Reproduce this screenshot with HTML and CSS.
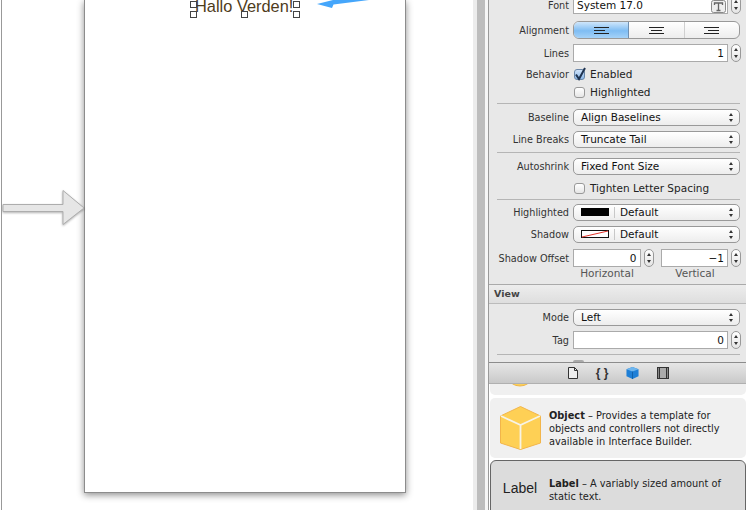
FILE: index.html
```html
<!DOCTYPE html>
<html lang="da">
<head>
  <meta charset="UTF-8" />
  <title>Interface Builder</title>
  <link rel="stylesheet" href="styles.css">
</head>
<body>
  <div class="app">
    <!-- Storyboard -->
    <div class="canvas">
      <svg class="entry-arrow" width="86" height="40" viewBox="0 0 86 40">
        <path d="M3 15.5H63V1.5L84 19L63 35.5V22.5H3Z" fill="#e6e6e6" stroke="#adadad" />
      </svg>
      <div class="scene">
        <div class="hello">
          Hallo Verden!
          <i class="handle h-ml"></i><i class="handle h-mr"></i>
          <i class="handle h-bl"></i><i class="handle h-bm"></i><i class="handle h-br"></i>
        </div>
      </div>
      <svg class="drag-arrow" width="56" height="12" viewBox="0 0 56 12">
        <path d="M0 4L15 8L16.5 4.5L52 0H16Z" fill="#45a6fb" />
      </svg>
    </div>

    <div class="splitter"></div>

    <!-- Inspector -->
    <div class="side">
      <div class="inspector">
        <div class="group first">
          <div class="row">
            <span class="lbl">Font</span>
            <div class="field text-left">System 17.0
              <svg class="t-btn" width="15" height="13" viewBox="0 0 15 13">
                <rect x=".5" y=".5" width="14" height="12" rx="2" fill="#eee" stroke="#8a8a8a" />
                <path d="M3.5 5V3H11.5V5M7.5 3V10.5M5.5 10.5H9.5" fill="none" stroke="#666" stroke-width="1.3" />
              </svg>
            </div>
            <div class="stepper"></div>
          </div>
          <div class="row gap-7">
            <span class="lbl">Alignment</span>
            <div class="segments">
              <div class="seg on">
                <svg width="15" height="7" viewBox="0 0 15 7"><path d="M0 .5H15M0 3.5H11M0 6.5H15" stroke="#222" /></svg>
              </div>
              <div class="seg">
                <svg width="15" height="7" viewBox="0 0 15 7"><path d="M0 .5H15M2 3.5H13M0 6.5H15" stroke="#222" /></svg>
              </div>
              <div class="seg divided">
                <svg width="15" height="7" viewBox="0 0 15 7"><path d="M0 .5H15M4 3.5H15M0 6.5H15" stroke="#222" /></svg>
              </div>
            </div>
          </div>
          <div class="row gap-5">
            <span class="lbl">Lines</span>
            <div class="field">1</div>
            <div class="stepper"></div>
          </div>
          <div class="row gap-3">
            <span class="lbl">Behavior</span>
            <label class="check on">
              <svg class="tick" width="13" height="14" viewBox="0 0 13 14"><path d="M2 7.5L5 12L11 1" fill="none" stroke="#1f3350" stroke-width="2" /></svg>
              Enabled
            </label>
          </div>
          <div class="row">
            <span class="lbl"></span>
            <label class="check">Highlighted</label>
          </div>
        </div>

        <div class="group pb-4">
          <div class="row">
            <span class="lbl">Baseline</span>
            <div class="popup">Align Baselines</div>
          </div>
          <div class="row gap-4">
            <span class="lbl">Line Breaks</span>
            <div class="popup">Truncate Tail</div>
          </div>
        </div>

        <div class="group">
          <div class="row">
            <span class="lbl">Autoshrink</span>
            <div class="popup">Fixed Font Size</div>
          </div>
          <div class="row gap-4">
            <span class="lbl"></span>
            <label class="check">Tighten Letter Spacing</label>
          </div>
        </div>

        <div class="group no-line">
          <div class="row">
            <span class="lbl">Highlighted</span>
            <div class="popup"><span class="swatch black"></span><span class="swatch-sep"></span>Default</div>
          </div>
          <div class="row gap-4">
            <span class="lbl">Shadow</span>
            <div class="popup">
              <svg class="swatch" width="28" height="8" viewBox="0 0 28 8">
                <rect x=".5" y=".5" width="27" height="7" fill="#fff" stroke="#111" />
                <path d="M1 7L27 1" stroke="#e2342c" />
              </svg>
              <span class="swatch-sep"></span>Default
            </div>
          </div>
          <div class="row gap-6">
            <span class="lbl">Shadow Offset</span>
            <div class="pair">
              <div class="pair-cell">
                <div class="field">0</div>
                <div class="stepper"></div>
              </div>
              <div class="pair-cell">
                <div class="field">&minus;1</div>
                <div class="stepper"></div>
              </div>
            </div>
          </div>
          <div class="captions">
            <span>Horizontal</span>
            <span>Vertical</span>
          </div>
        </div>

        <div class="section-head">View</div>

        <div class="group last">
          <div class="row">
            <span class="lbl">Mode</span>
            <div class="popup">Left</div>
          </div>
          <div class="row gap-5">
            <span class="lbl">Tag</span>
            <div class="field">0</div>
            <div class="stepper"></div>
          </div>
        </div>
        <div class="peek"></div>
      </div>

      <!-- Library tabs -->
      <div class="tabs">
        <svg width="10" height="12" viewBox="0 0 10 12">
          <path d="M.5 .5H6.5L9.5 3.5V11.5H.5Z" fill="#eee" stroke="#333" />
          <path d="M6.5 .5V3.5H9.5" fill="none" stroke="#333" />
        </svg>
        <span class="braces">{ }</span>
        <svg width="13" height="14" viewBox="0 0 14 14">
          <path d="M7 .5L13.5 3V10.5L7 13.5L.5 10.5V3Z" fill="#1f7fd6" />
          <path d="M.5 3L7 5.5L13.5 3L7 .5Z" fill="#6fb6ee" />
          <path d="M7 5.5V13.5" stroke="#0f5fa8" />
        </svg>
        <svg width="12" height="12" viewBox="0 0 12 12">
          <rect width="12" height="12" fill="#333" />
          <rect x="3" y="1" width="6" height="10" fill="#aaa" />
          <path d="M1 2H2M1 4H2M1 6H2M1 8H2M1 10H2M10 2H11M10 4H11M10 6H11M10 8H11M10 10H11" stroke="#ddd" />
        </svg>
      </div>

      <!-- Library list -->
      <div class="library">
        <div class="card stub">
          <svg width="40" height="11" viewBox="0 0 40 11"><ellipse cx="20" cy="-6" rx="11" ry="8" fill="#fcd05a" stroke="#eeb64a" /></svg>
        </div>
        <div class="card">
          <svg class="cube" width="41" height="44" viewBox="0 0 41 44">
            <path d="M20.5 .5L40.5 10V37L20.5 43.5L.5 37V10Z" fill="#fed055" stroke="#f2b54a" />
            <path d="M1 10L20.5 19L40 10M20.5 19V43" fill="none" stroke="#f7f3e6" stroke-width="1.8" />
          </svg>
          <p class="desc"><b>Object</b> &ndash; Provides a template for objects and controllers not directly available in Interface Builder.</p>
        </div>
        <div class="card picked">
          <span class="sample">Label</span>
          <p class="desc"><b>Label</b> &ndash; A variably sized amount of static text.</p>
        </div>
      </div>
    </div>
  </div>
</body>
</html>
```

FILE: styles.css
```css
/* Basic page */
html, body {
  margin: 0;
  height: 100%;
  overflow: hidden;
}

body {
  font-family: "DejaVu Sans", sans-serif;
  font-size: 10.5px;
  color: #222;
  background: #fff;
}

.app {
  display: flex;
  width: 746px;
  height: 510px;
  overflow: hidden;
}

/* Storyboard */
.canvas {
  position: relative;
  width: 471px;
  height: 510px;
  border-left: 1px solid #999;
  margin-left: 1px;
  overflow: hidden;
  background: #fff;
  flex: none;
}

.scene {
  width: 320px;
  height: 492px;
  margin-left: 82px;
  border: 1px solid #8c8c8c;
  border-top: 0;
  box-shadow: 0 2px 7px rgba(0, 0, 0, 0.45);
  background: #fff;
}

.hello {
  position: absolute;
  left: 193px;
  top: -5px;
  width: 100px;
  height: 22px;
  font-family: "Liberation Sans", sans-serif;
  font-size: 16.4px;
  line-height: 22px;
  color: #4e3b1c;
  white-space: nowrap;
}

.handle {
  position: absolute;
  width: 5px;
  height: 5px;
  border: 1px solid #444;
  background: #fff;
}
.h-ml { left: -5px; top: 6px; }
.h-mr { left: 98px; top: 6px; }
.h-bl { left: -5px; top: 16px; }
.h-bm { left: 46px; top: 16px; }
.h-br { left: 98px; top: 16px; }

.entry-arrow {
  position: absolute;
  left: -2px;
  top: 189px;
  filter: drop-shadow(0 1px 1px rgba(0, 0, 0, 0.3));
}

.drag-arrow {
  position: absolute;
  left: 315px;
  top: 0;
}

.splitter {
  width: 15px;
  flex: none;
  box-sizing: border-box;
  background: #bdbdbd;
  border-left: 4px solid #ececec;
  border-right: 3px solid #f6f6f6;
}

/* Inspector */
.side {
  flex: 1;
  border-left: 1px solid #9a9a9a;
  display: flex;
  flex-direction: column;
  min-width: 0;
}

.inspector {
  position: relative;
  height: 362px;
  flex: none;
  background: #e8e8e8;
}

.group {
  margin: 0 6px 0 8px;
  padding: 4px 0 2px;
  border-bottom: 1px solid #b5b5b5;
}
.group.first {
  margin-top: -4px;
  padding-top: 0;
}
.group.pb-4 {
  padding-bottom: 4px;
}
.group.no-line {
  border-bottom: 0;
  padding-top: 3px;
  padding-bottom: 4px;
}
.group.last {
  padding-bottom: 5px;
}

.row {
  display: flex;
  align-items: center;
  height: 18px;
}
.gap-3 { margin-top: 3px; }
.gap-4 { margin-top: 4px; }
.gap-5 { margin-top: 5px; }
.gap-6 { margin-top: 6px; }
.gap-7 { margin-top: 7px; }

.lbl {
  width: 72px;
  margin-right: 4px;
  flex: none;
  text-align: right;
  white-space: nowrap;
  font-size: 9.7px;
  color: #333;
}

.field {
  position: relative;
  flex: 1;
  height: 18px;
  box-sizing: border-box;
  padding-right: 3px;
  border: 1px solid #aaa;
  background: #fff;
  text-align: right;
  line-height: 17px;
  color: #111;
  min-width: 0;
}
.field.text-left {
  text-align: left;
  padding-left: 3px;
}

.t-btn {
  position: absolute;
  right: 1px;
  top: 3px;
}

.stepper {
  position: relative;
  width: 10px;
  height: 18px;
  margin: 0 -1px 0 3px;
  box-sizing: border-box;
  border: 1px solid #999;
  border-radius: 5px;
  background: linear-gradient(#fff, #e4e4e4);
  flex: none;
}
.stepper::before, .stepper::after {
  content: "";
  position: absolute;
  left: 2px;
  border-left: 2px solid transparent;
  border-right: 2px solid transparent;
}
.stepper::before { top: 3px; border-bottom: 3px solid #333; }
.stepper::after { bottom: 3px; border-top: 3px solid #333; }

.popup {
  position: relative;
  flex: 1;
  display: flex;
  align-items: center;
  height: 17px;
  box-sizing: border-box;
  padding-left: 7px;
  border: 1px solid #999;
  border-radius: 5px;
  background: linear-gradient(#fff, #ededed);
  color: #111;
}
.popup::before, .popup::after {
  content: "";
  position: absolute;
  right: 6px;
  border-left: 2px solid transparent;
  border-right: 2px solid transparent;
}
.popup::before { top: 3px; border-bottom: 3px solid #333; }
.popup::after { bottom: 3px; border-top: 3px solid #333; }

.swatch {
  width: 28px;
  height: 8px;
  flex: none;
}
.swatch.black { background: #000; }
.swatch-sep {
  width: 1px;
  height: 11px;
  margin: 0 5px;
  flex: none;
  background: #c8c8c8;
}

.segments {
  display: flex;
  flex: 1;
  height: 18px;
  box-sizing: border-box;
  border: 1px solid #999;
  border-radius: 6px;
  overflow: hidden;
  background: linear-gradient(#fff, #ededed);
}
.seg {
  flex: 1 1 0;
  box-sizing: border-box;
  display: flex;
  align-items: center;
  justify-content: center;
}
.seg.on {
  background: linear-gradient(#cfe6fb, #7fbdf3 55%, #a5d2f8);
  border-right: 1px solid #6f8fb0;
}
.seg.divided {
  border-left: 1px solid #d0d0d0;
}

.check {
  position: relative;
  display: flex;
  align-items: center;
  color: #222;
  margin-left: 1px;
}
.check::before {
  content: "";
  width: 11px;
  height: 11px;
  margin-right: 5px;
  box-sizing: border-box;
  border: 1px solid #999;
  border-radius: 3px;
  background: linear-gradient(#fff, #e6e6e6);
}
.check.on::before {
  background: linear-gradient(#cfe2f8, #8db9ea);
  border-color: #6a86a8;
}
.tick {
  position: absolute;
  left: 0;
  top: -1px;
}

.pair {
  display: flex;
  gap: 8px;
  flex: 1;
}
.pair-cell {
  display: flex;
  flex: 1;
  min-width: 0;
}

.captions {
  display: flex;
  gap: 20px;
  margin-left: 76px;
  height: 13px;
  line-height: 13px;
  color: #555;
}
.captions span {
  width: 68px;
  text-align: center;
}

.section-head {
  height: 18px;
  padding-left: 5px;
  line-height: 18px;
  font-size: 9.5px;
  font-weight: bold;
  color: #444;
  border-top: 1px solid #aaa;
  border-bottom: 1px solid #bbb;
  background: linear-gradient(#ededed, #dedede);
}

.peek {
  position: absolute;
  left: 84px;
  top: 360px;
  width: 11px;
  height: 2px;
  border-radius: 6px 6px 0 0;
  background: #aaa;
}

/* Library tabs */
.tabs {
  display: flex;
  align-items: center;
  justify-content: center;
  gap: 18px;
  height: 20px;
  padding-left: 2px;
  flex: none;
  border-top: 1px solid #8c8c8c;
  border-bottom: 1px solid #b0b0b0;
  background: linear-gradient(#e6e6e6, #c9c9c9);
}
.braces {
  font-family: "Liberation Sans", sans-serif;
  font-size: 12px;
  font-weight: bold;
  color: #333;
}

/* Library list */
.library {
  flex: 1;
  display: flex;
  flex-direction: column;
  gap: 3px;
  padding-left: 1px;
  background: #fff;
  overflow: hidden;
}
.card {
  display: flex;
  align-items: center;
  height: 60px;
  flex: none;
  border-radius: 5px;
  background: #f0f0f0;
}
.card.stub {
  height: 11px;
  align-items: flex-start;
  padding-left: 10px;
  border-radius: 0 0 5px 5px;
}
.card.picked {
  height: 60px;
  box-sizing: border-box;
  margin-top: -1px;
  border: 1px solid #666;
  background: #dcdcdc;
  align-items: flex-start;
  border-radius: 6px 6px 0 0;
}
.cube {
  margin-left: 10px;
  margin-right: 8px;
  flex: none;
}
.desc {
  margin: 0;
  width: 185px;
  font-size: 9.8px;
  line-height: 13px;
  color: #222;
}
.picked .desc {
  margin-top: 16px;
}
.sample {
  width: 58px;
  flex: none;
  margin-top: 19px;
  text-align: center;
  font-family: "Liberation Sans", sans-serif;
  font-size: 14px;
  color: #222;
}
```
